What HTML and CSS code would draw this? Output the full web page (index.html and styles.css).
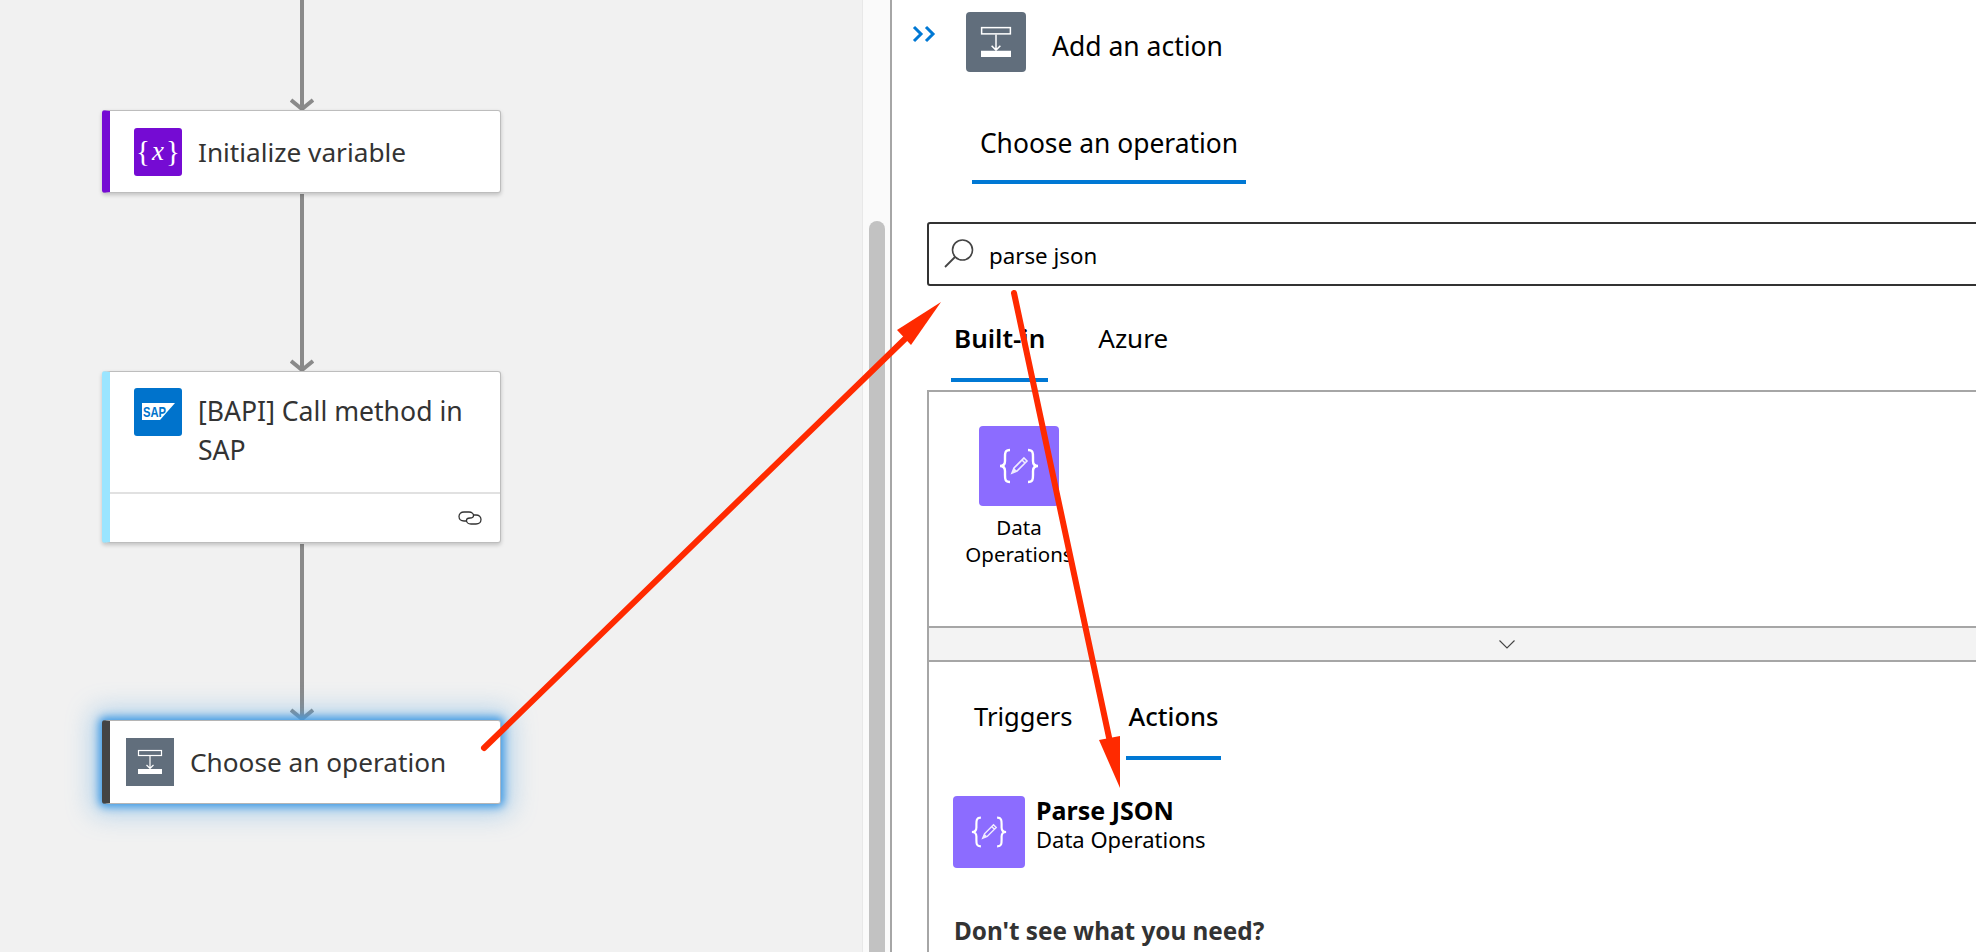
FILE: index.html
```html
<!DOCTYPE html>
<html lang="en">
<head>
    <meta charset="UTF-8">
    <meta name="viewport" content="width=device-width, initial-scale=1.0">
    <title>Add an action</title>
    <link rel="stylesheet" href="styles.css">
</head>
<body>

    <!-- shared icons -->
    <svg class="defs" width="0" height="0">
        <symbol id="op-icon" viewBox="0 0 48 48">
            <rect x="12.500" y="12.500" width="23" height="5" fill="none" stroke="#fff" stroke-width="1.200"/>
            <path d="M24 18V30M20.500 27L24 30.500L27.500 27" fill="none" stroke="#fff" stroke-width="1.200"/>
            <rect x="12" y="31" width="24" height="5" fill="#fff"/>
        </symbol>
        <symbol id="data-icon" viewBox="0 0 80 80">
            <path d="M31 24C26 24 26 27 26 31V35C26 38 24 40 21 40C24 40 26 42 26 45V49C26 53 26 56 31 56" fill="none" stroke="#fff" stroke-width="2.400"/>
            <path d="M49 24C54 24 54 27 54 31V35C54 38 56 40 59 40C56 40 54 42 54 45V49C54 53 54 56 49 56" fill="none" stroke="#fff" stroke-width="2.400"/>
            <path d="M45 32L48 35L38 45L33 47L35 42Z M43 34L46 37" fill="none" stroke="#f0ecff" stroke-width="1.600"/>
            <path d="M35 42L38 45L33 47Z" fill="#f0ecff"/>
        </symbol>
    </svg>

    <div class="page">
        <!-- designer canvas -->
        <div class="canvas">
            <div class="line line-first"><svg class="head" width="24" height="13" viewBox="0 0 24 13"><path d="M1 2L12 11L23 2" fill="none" stroke="#8a8a8a" stroke-width="4"/></svg></div>

            <div class="card card-var">
                <div class="card-row">
                    <span class="card-icon icon-var"><span class="brace">{</span><i class="var-x">x</i><span class="brace">}</span></span>
                    <span class="card-title">Initialize variable</span>
                </div>
            </div>

            <div class="line line-mid"><svg class="head" width="24" height="13" viewBox="0 0 24 13"><path d="M1 2L12 11L23 2" fill="none" stroke="#8a8a8a" stroke-width="4"/></svg></div>

            <div class="card card-sap">
                <div class="card-row card-row-top">
                    <span class="card-icon icon-sap">
                        <svg width="48" height="48" viewBox="0 0 48 48">
                            <path d="M8 15H41L26 32H8Z" fill="#fff"/>
                            <text x="9" y="29" class="sap-text" textLength="23" lengthAdjust="spacingAndGlyphs">SAP</text>
                        </svg>
                    </span>
                    <span class="card-title card-title-wrap">[BAPI] Call method in SAP</span>
                </div>
                <div class="card-foot">
                    <svg width="24" height="16" viewBox="0 0 24 16">
                        <path d="M9 11H6C3 11 1 9 1 6.500C1 4 3 2 6 2H11C14 2 15.500 4 15.500 5.500C15.500 7 14 8 12 8" fill="none" stroke="#333" stroke-width="1.300"/>
                        <path d="M15 5H18C21 5 23 7 23 9.500C23 12 21 14 18 14H13C10 14 8.500 12 8.500 10.500C8.500 9 10 8 12 8" fill="none" stroke="#333" stroke-width="1.300"/>
                    </svg>
                </div>
            </div>

            <div class="line line-last"><svg class="head" width="24" height="13" viewBox="0 0 24 13"><path d="M1 2L12 11L23 2" fill="none" stroke="#8a8a8a" stroke-width="4"/></svg></div>

            <div class="card card-op">
                <div class="card-row card-row-op">
                    <svg class="card-icon icon-op"><use href="#op-icon"/></svg>
                    <span class="card-title">Choose an operation</span>
                </div>
            </div>
        </div>

        <!-- canvas scrollbar -->
        <div class="scrollbar"><div class="thumb"></div></div>

        <!-- action panel -->
        <div class="panel">
            <div class="panel-head">
                <svg class="collapse" width="24" height="18" viewBox="0 0 24 18">
                    <path d="M2 2L9 9L2 16M14 2L21 9L14 16" fill="none" stroke="#0078d4" stroke-width="3"/>
                </svg>
                <svg class="panel-icon"><use href="#op-icon"/></svg>
                <h1 class="panel-title">Add an action</h1>
            </div>

            <div class="op-tab">Choose an operation</div>

            <div class="search">
                <svg width="30" height="32" viewBox="0 0 30 32">
                    <circle cx="18.500" cy="12" r="10" fill="none" stroke="#444" stroke-width="1.600"/>
                    <path d="M11 19L1 29" fill="none" stroke="#444" stroke-width="1.800"/>
                </svg>
                <span class="search-text">parse json</span>
            </div>

            <div class="tabs">
                <span class="tab active">Built-in</span>
                <span class="tab">Azure</span>
            </div>

            <div class="box">
                <div class="tiles">
                    <div class="tile">
                        <svg class="tile-icon"><use href="#data-icon"/></svg>
                        <div class="tile-name">Data Operations</div>
                    </div>
                </div>
                <div class="more">
                    <svg width="16" height="9" viewBox="0 0 16 9"><path d="M0.500 0.500L8 8L15.500 0.500" fill="none" stroke="#444" stroke-width="1.100"/></svg>
                </div>
                <div class="tabs tabs-lower">
                    <span class="tab">Triggers</span>
                    <span class="tab active">Actions</span>
                </div>
                <div class="result">
                    <svg class="result-icon"><use href="#data-icon"/></svg>
                    <div>
                        <div class="result-name">Parse JSON</div>
                        <div class="result-sub">Data Operations</div>
                    </div>
                </div>
                <div class="need">Don't see what you need?</div>
            </div>
        </div>
    </div>

    <!-- red annotations on top of the screenshot -->
    <svg class="marks" width="1976" height="952" viewBox="0 0 1976 952">
        <path d="M484 748L908 336" fill="none" stroke="#ff2a00" stroke-width="6" stroke-linecap="round"/>
        <path d="M941 302L897 330L911 345Z" fill="#ff2a00"/>
        <path d="M1014 293L1110 742" fill="none" stroke="#ff2a00" stroke-width="6" stroke-linecap="round"/>
        <path d="M1120 788L1099 740L1120 736Z" fill="#ff2a00"/>
    </svg>

</body>
</html>
```

FILE: styles.css
```css
body {
    margin: 0;
    overflow: hidden;
    font-family: "Noto Sans", "Open Sans", sans-serif;
    color: #000;
    background-color: #fff;
}

.defs {
    position: absolute;
}

.page {
    display: flex;
    height: 952px;
    overflow: hidden;
}

/* canvas */
.canvas {
    width: 760px;
    padding-left: 102px;
    flex-shrink: 0;
    background-color: #f1f1f1;
}

.line {
    position: relative;
    width: 4px;
    margin-left: 198px;
    background-color: #8a8a8a;
}

.line-first {
    height: 110px;
}

.line-mid {
    height: 177px;
    margin-top: 1px;
}

.line-last {
    height: 176px;
    margin-top: 1px;
}

.head {
    position: absolute;
    left: -10px;
    bottom: -1px;
}

.card {
    position: relative;
    z-index: 1;
    box-sizing: border-box;
    width: 399px;
    border: 1px solid #bdbdbd;
    border-left: 8px solid #750bd3;
    border-radius: 3px;
    background-color: #fff;
    box-shadow: 0 2px 4px rgba(0, 0, 0, 0.2);
}

.card-var {
    height: 83px;
}

.card-sap {
    height: 172px;
    border-left-color: #9ae5ff;
}

.card-op {
    height: 84px;
    border-color: #b5b5b5 #a8b8c8 #b5b5b5 #444;
    box-shadow: 0 0 8px 3px #3f9ae4, 0 0 26px 10px rgba(80, 160, 225, 0.4);
}

.card-row {
    display: flex;
    align-items: center;
    gap: 16px;
    height: 81px;
    padding-left: 24px;
}

.card-row-top {
    align-items: flex-start;
    height: 122px;
    padding-top: 16px;
    box-sizing: border-box;
    border-bottom: 2px solid #e1e1e1;
}

.card-row-op {
    padding-left: 16px;
    height: 82px;
}

.card-icon {
    flex-shrink: 0;
    width: 48px;
    height: 48px;
    border-radius: 3px;
}

.icon-var {
    display: flex;
    align-items: center;
    justify-content: center;
    gap: 2px;
    background-color: #750bd3;
    color: #fff;
    font-family: "Liberation Serif", serif;
    font-size: 29px;
}

.var-x {
    font-size: 27px;
}

.icon-sap {
    background-color: #0073cc;
}

.sap-text {
    font-family: "Liberation Sans", sans-serif;
    font-size: 15px;
    font-weight: bold;
    fill: #0073cc;
}

.icon-op {
    border-radius: 0;
    background-color: #616e7c;
}

.card-title {
    font-size: 26.200px;
    line-height: 40px;
    color: #333;
}

.card-title-wrap {
    margin-top: 4px;
    font-size: 26.600px;
    line-height: 39px;
}

.card-foot {
    display: flex;
    justify-content: flex-end;
    padding: 16px 18px 0 0;
}

/* scrollbar */
.scrollbar {
    box-sizing: border-box;
    width: 28px;
    flex-shrink: 0;
    padding: 221px 0 0 6px;
    border-left: 1px solid #e8e8e8;
    background-color: #fafafa;
}

.thumb {
    width: 16px;
    height: 900px;
    border-radius: 8px;
    background-color: #c2c2c2;
}

/* panel */
.panel {
    flex: 1;
    min-width: 0;
    border-left: 2px solid #a6a6a6;
}

.panel-head {
    display: flex;
    height: 60px;
    padding: 12px 0 0 20px;
}

.collapse {
    flex-shrink: 0;
    margin-top: 13px;
}

.panel-icon {
    flex-shrink: 0;
    width: 60px;
    height: 60px;
    margin-left: 30px;
    border-radius: 4px;
    background-color: #616e7c;
}

.panel-title {
    margin: 4px 0 0 26px;
    font-size: 26.500px;
    font-weight: normal;
    line-height: 60px;
}

.op-tab {
    width: 274px;
    margin: 47px 0 0 80px;
    padding-bottom: 13px;
    border-bottom: 4px solid #0078d4;
    font-size: 26.400px;
    line-height: 48px;
    text-align: center;
}

.search {
    display: flex;
    align-items: center;
    gap: 15px;
    box-sizing: border-box;
    width: 1160px;
    height: 64px;
    margin: 38px 0 0 35px;
    padding-left: 15px;
    border: 2px solid #333;
    border-radius: 3px;
}

.search-text {
    margin-top: 3px;
    font-size: 22.300px;
}

.tabs {
    display: flex;
    gap: 47px;
    margin-left: 59px;
    padding-top: 28px;
}

.tab {
    padding: 0 3px 16px;
    border-bottom: 4px solid transparent;
    font-size: 26px;
    line-height: 48px;
}

.tab.active {
    border-bottom-color: #0078d4;
    font-weight: 600;
}

.box {
    box-sizing: border-box;
    width: 1160px;
    height: 600px;
    margin: 8px 0 0 35px;
    border: 2px solid #a6a6a6;
}

.tiles {
    height: 200px;
    padding: 34px 0 0 25px;
}

.tile {
    width: 130px;
    text-align: center;
}

.tile-icon {
    display: block;
    width: 80px;
    height: 80px;
    margin: 0 auto 8px;
    border-radius: 4px;
    background-color: #8c6cff;
}

.tile-name {
    font-size: 20.500px;
    line-height: 27px;
}

.more {
    display: flex;
    align-items: center;
    justify-content: center;
    height: 32px;
    padding-bottom: 0;
    border-top: 2px solid #a6a6a6;
    border-bottom: 2px solid #a6a6a6;
    background-color: #f3f3f3;
}

.tabs-lower {
    gap: 50px;
    margin-left: 42px;
    padding-top: 30px;
}

.tabs-lower .tab {
    font-size: 25.500px;
}

.tabs-lower .tab.active {
    font-weight: 500;
}

.result {
    display: flex;
    gap: 11px;
    margin: 36px 0 0 24px;
}

.result-icon {
    flex-shrink: 0;
    width: 72px;
    height: 72px;
    border-radius: 4px;
    background-color: #8c6cff;
}

.result-name {
    font-size: 25px;
    font-weight: bold;
    line-height: 29px;
}

.result-sub {
    font-size: 22px;
    line-height: 29px;
}

.need {
    margin: 48px 0 0 25px;
    font-size: 24.300px;
    font-weight: bold;
    line-height: 30px;
    color: #333;
}

/* annotations */
.marks {
    position: absolute;
    left: 0;
    top: 0;
    z-index: 2;
    pointer-events: none;
}
```
